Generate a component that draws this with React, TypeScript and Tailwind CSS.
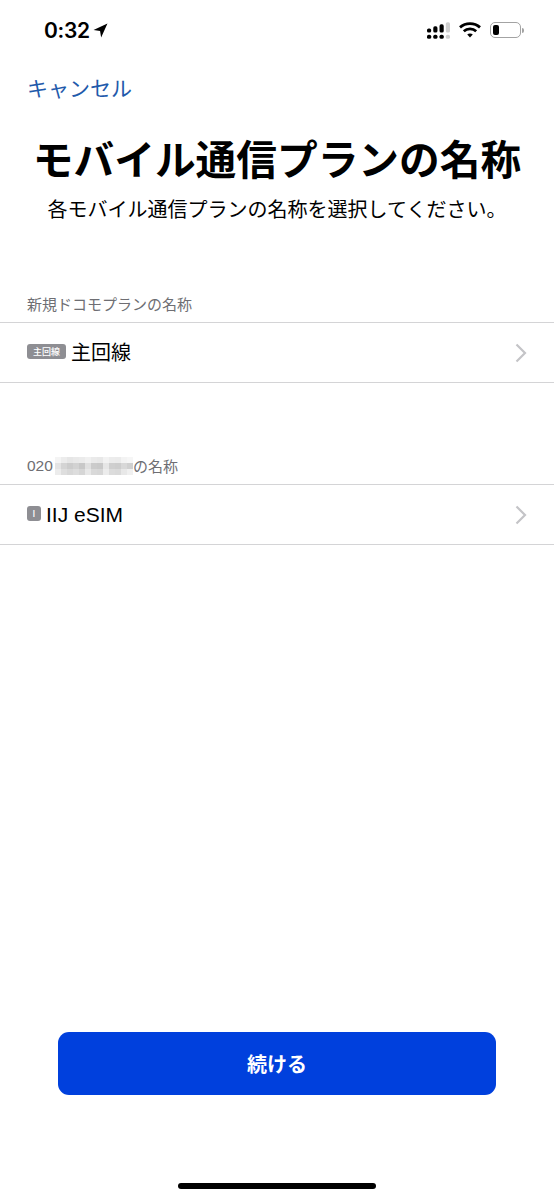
import React from 'react';

const jp = 'font-["Noto_Sans_CJK_JP","Liberation_Sans",sans-serif]';

// pixelated phone number
const mosaic = [
  '#f4f4f4', '#ececec', '#e6e6e6', '#e9e9e9', '#ebebeb', '#f0f0f0', '#eaeaea', '#e8e8e8', '#f2f2f2', '#ececec', '#ebebeb', '#f3f3f3', '#f6f6f6',
  '#e4e4e4', '#d4d4d4', '#cccccc', '#d2d2d2', '#c8c8c8', '#e0e0e0', '#cbcbcb', '#c9c9c9', '#e6e6e6', '#cfcfcf', '#cdcdcd', '#d8d8d8', '#d0d0d0',
  '#ececec', '#dedede', '#d8d8d8', '#dddddd', '#d6d6d6', '#e8e8e8', '#d9d9d9', '#d7d7d7', '#ececec', '#dcdcdc', '#dadada', '#e8e8e8', '#f0f0f0',
];

function StatusBar() {
  return (
    <div className="h-[60px] pl-[44px] pr-[30px] pt-[18px] flex items-start justify-between">
      <div className="flex items-center gap-[3px] h-[24px]">
        <span className="text-[21px] font-semibold leading-none text-black font-['Inter',sans-serif] tracking-[-0.3px]">0:32</span>
        <svg width="15" height="15" viewBox="0 0 14 14" className="mt-[1px]">
          <path d="M13.5 0.5 L0.5 6.6 L6.6 7.4 L7.6 13.5 Z" fill="#000" />
        </svg>
      </div>
      <div className="flex items-center h-[24px]">
        <svg width="23" height="17" viewBox="0 0 22 16" className="mr-[9px]">
          <g fill="#000">
            <rect x="0" y="6" width="4" height="4" rx="1.6" />
            <rect x="0" y="12" width="4" height="4" rx="1.6" />
            <rect x="6" y="4" width="4" height="6" rx="1.6" />
            <rect x="6" y="12" width="4" height="4" rx="1.6" />
            <rect x="12" y="2" width="4" height="8" rx="1.6" />
            <rect x="12" y="12" width="4" height="4" rx="1.6" />
          </g>
          <rect x="18" y="0" width="4" height="10" rx="1.6" fill="#cfcfcf" />
          <rect x="18" y="12" width="4" height="4" rx="1.6" fill="#cfcfcf" />
        </svg>
        <svg width="22" height="16" viewBox="0 0 22 16" className="mr-[9px]">
          <path d="M1 5.4 C6.6 0.4 15.4 0.4 21 5.4" fill="none" stroke="#000" strokeWidth="2.8" />
          <path d="M4.8 9.2 C8.2 6.2 13.8 6.2 17.2 9.2" fill="none" stroke="#000" strokeWidth="2.8" />
          <path d="M8.2 12.4 C9.8 11.2 12.2 11.2 13.8 12.4 L11 15.4 Z" fill="#000" />
        </svg>
        <div className="w-[31px] h-[16px] rounded-[5px] border border-[#a3a3a3] p-[2px] flex">
          <div className="w-[6px] h-full rounded-[2px] bg-black" />
        </div>
        <div className="w-[2px] h-[5px] ml-[1px] rounded-r-full bg-[#a3a3a3]" />
      </div>
    </div>
  );
}

function SectionHeader({ children }: { children: React.ReactNode }) {
  return <div className="h-[36px] pt-[7px] pl-[27px] text-[15px] leading-[22px] text-[#6e6e73] flex items-start">{children}</div>;
}

function PlanRow({ badge, wide, label }: { badge: string; wide?: boolean; label: React.ReactNode }) {
  return (
    <div className="h-[61px] border-y border-[#d4d4d6] pl-[27px] pr-[27px] flex items-center justify-between">
      <div className="flex items-center">
        <span className={`${wide ? 'w-[39px] mr-[5px]' : 'w-[14px] mr-[5px]'} h-[15px] mb-[2px] rounded-[3px] bg-[#8e8e93] text-white text-[9px] font-medium leading-none flex items-center justify-center`}>
          {badge}
        </span>
        {label}
      </div>
      <svg width="12" height="20" viewBox="0 0 12 20">
        <path d="M1.5 1.5 L10 10 L1.5 18.5" fill="none" stroke="#c4c4c7" strokeWidth="2.2" />
      </svg>
    </div>
  );
}

export default function App() {
  return (
    <div className={`${jp} w-[554px] h-[1200px] bg-white flex flex-col overflow-hidden`}>
      <StatusBar />

      <div className="pl-[27px] h-[44px] flex items-center mt-[5px] text-[21px] leading-none text-[#1f5aab]">キャンセル</div>

      <h1 className="mt-[19px] text-center text-[40.7px] leading-[60px] font-bold text-black whitespace-nowrap">モバイル通信プランの名称</h1>
      <p className="mt-[6px] text-center text-[20px] leading-[30px] text-black whitespace-nowrap">各モバイル通信プランの名称を選択してください。</p>

      <div className="mt-[62px]">
        <SectionHeader>新規ドコモプランの名称</SectionHeader>
        <PlanRow badge="主回線" wide label={<span className="text-[20px] leading-none text-black mb-[2px]">主回線</span>} />
      </div>

      <div className="mt-[65px]">
        <SectionHeader>
          <span className="w-[28px] text-[15.5px] font-['Liberation_Sans',sans-serif]">020</span>
          <span className="grid grid-cols-[repeat(13,6px)] grid-rows-[repeat(3,6px)] mt-[2px] blur-[0.6px]">
            {mosaic.map((c, i) => (
              <span key={i} style={{ backgroundColor: c }} />
            ))}
          </span>
          <span>の名称</span>
        </SectionHeader>
        <PlanRow
          badge="I"
          label={<span className="text-[21px] leading-none text-black font-['Liberation_Sans',sans-serif]">IIJ eSIM</span>}
        />
      </div>

      <div className="flex-1" />

      <div className="px-[58px] mb-[88px]">
        <button className="w-full h-[63px] rounded-[11px] bg-[#0040dd] text-white text-[20px] font-bold">続ける</button>
      </div>
      <div className="mb-[11px] flex justify-center">
        <div className="w-[198px] h-[6px] rounded-full bg-black" />
      </div>
    </div>
  );
}
